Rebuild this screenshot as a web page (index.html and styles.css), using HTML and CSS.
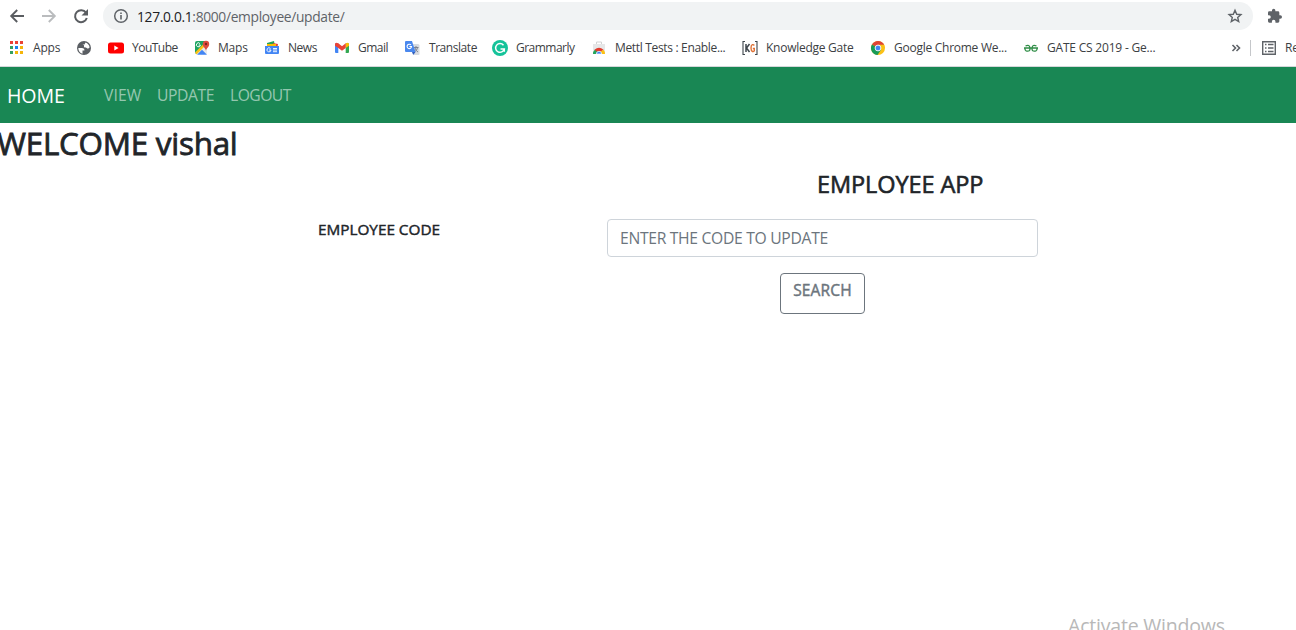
FILE: index.html
```html
<!DOCTYPE html>
<html lang="en">
<head>
<meta charset="utf-8">
<title>Employee App</title>
<link rel="stylesheet" href="styles.css">
</head>
<body>
<header class="chrome">
  <div class="toolbar">
    <svg class="tool" viewBox="0 0 16 16"><path d="M15 8H2.5M8.2 2L2.2 8l6 6" fill="none" stroke="#5a5d61" stroke-width="1.9"/></svg>
    <svg class="tool" viewBox="0 0 16 16"><path d="M1 8h12.5M7.8 2l6 6-6 6" fill="none" stroke="#babcbe" stroke-width="1.9"/></svg>
    <svg class="tool" viewBox="0 0 16 16"><path d="M13 4.7A6 6 0 1 0 13.8 10" fill="none" stroke="#5a5d61" stroke-width="2"/><path d="M15 1v6.5H8.5z" fill="#5a5d61"/></svg>
    <div class="address">
      <svg class="info" viewBox="0 0 16 16"><circle cx="8" cy="8" r="6.3" fill="none" stroke="#5f6368" stroke-width="1.5"/><path d="M7.2 7h1.6v4.5H7.2zM7.2 4.4h1.6V6H7.2z" fill="#5f6368"/></svg>
      <span class="url"><b>127.0.0.1</b>:8000/employee/update/</span>
      <svg class="star" viewBox="0 0 16 16"><path d="M8 2.300l1.700 4 4.200.3-3.200 2.800 1 4.200L8 11.400l-3.700 2.200 1-4.200-3.200-2.800 4.200-.3z" fill="none" stroke="#5f6368" stroke-width="1.4"/></svg>
    </div>
    <svg class="puzzle" viewBox="1 0 23 24"><path d="M20.5 11H19V7a2 2 0 0 0-2-2h-4V3.500a2.500 2.500 0 0 0-5 0V5H4a2 2 0 0 0-2 2v3.800h1.500a2.700 2.700 0 0 1 0 5.400H2V20a2 2 0 0 0 2 2h3.800v-1.500a2.700 2.700 0 0 1 5.400 0V22H17a2 2 0 0 0 2-2v-4h1.500a2.500 2.500 0 0 0 0-5z" fill="#5f6368"/></svg>
  </div>
  <nav class="bookmarks">
    <a class="mark"><svg viewBox="0 0 16 16"><path d="M2 1h3v3H2zM7 1h3v3H7zM12 1h3v3h-3z" fill="#ea4335"/><path d="M2 6h3v3H2zM2 11h3v3H2z" fill="#34a060"/><path d="M7 6h3v3H7z" fill="#1a83f0"/><path d="M12 6h3v3h-3zM7 11h3v3H7zM12 11h3v3h-3z" fill="#f5b50a"/></svg><span class="t-apps">Apps</span></a>
    <a class="mark"><svg viewBox="0 0 16 16"><circle cx="8" cy="8" r="7" fill="#5a5e63"/><path d="M2.300 8h3.500c2 0 2.800 1 2.600 2.500H6.500v3.200C4 13 2.300 11 2.300 8zM9.500 2.500c2.300.7 4 2.700 4.100 5L12 8.700 9.800 7.500 8 7.300V5.200L6.500 4.500h2z" fill="#fff"/></svg></a>
    <a class="mark"><svg viewBox="0 0 16 16"><rect y="2.500" width="16" height="11" rx="2.500" fill="#f00"/><path d="M6.300 5.500v5l4.300-2.500z" fill="#fff"/></svg><span class="t-yt">YouTube</span></a>
    <a class="mark"><svg viewBox="0 0 16 16"><path d="M1 3q0-2 2-2h10v13H3q-2 0-2-2z" fill="#1da462"/><path d="M2 14L13 3v11z" fill="#e8eaed"/><path d="M3 14.800l5-5 5 5z" fill="#4285f4"/><path d="M1 12.500L11 2.500l1.500 2L2.500 14.500z" fill="#fbc116"/><path d="M5.900 3.500A2 2 0 1 0 6.400 5H4.700" fill="none" stroke="#fff"/><path d="M12 11c0-3-3.200-3.500-3.200-7a3.200 3.200 0 0 1 6.400 0c0 3.500-3.200 4-3.200 7z" fill="#dd4b3e"/><circle cx="12" cy="4" r="1.200" fill="#7f231c"/></svg><span class="t-maps">Maps</span></a>
    <a class="mark"><svg viewBox="0 0 16 16"><path d="M3 3l7-2 1 6H3z" fill="#24a35a"/><path d="M9 3l5 1-1 6H8z" fill="#e94335"/><path d="M3 4h9v5H3z" fill="#fbbc04"/><path d="M1 6h14v7q0 1-1 1H2q-1 0-1-1z" fill="#4285f4"/><path d="M6.500 8.500A2 2 0 1 0 7 10H5M9 8.500h4M9 10h4M9 11.700h4" fill="none" stroke="#fff" stroke-width=".9"/></svg><span class="t-news">News</span></a>
    <a class="mark"><svg viewBox="0 0 16 16"><path d="M1 3.500h3.300V13H2q-1 0-1-1z" fill="#4285f4"/><path d="M11.700 3.500H15V12q0 1-1 1h-2.300z" fill="#34a853"/><path d="M11.700 3.300q3.300-1.500 3.300 1v1.500L11.700 8z" fill="#fbbc04"/><path d="M1 4.300q0-2.500 3.300-1L8 6.200l3.700-2.900V8L8 10.800 4.300 8 1 5.800z" fill="#ea4335"/></svg><span class="t-gmail">Gmail</span></a>
    <a class="mark"><svg viewBox="0 0 16 16"><path d="M7 4h7q1.500 0 1.500 1.500V14q0 1-1 1H10z" fill="#d8dbe0"/><path d="M9.500 7.500h5M12 6v1.500M10.500 12q3-2 3-4.500M11 8q1 3 3 4" fill="none" stroke="#747b88" stroke-width=".9"/><path d="M2 1h6l3.500 11H2q-1 0-1-1V2q0-1 1-1z" fill="#4a88ee"/><path d="M8 12h3.500L9.200 15z" fill="#315fbd"/><path d="M7 5A2.200 2.200 0 1 0 7.500 6.500H5.400" fill="none" stroke="#fff" stroke-width="1.100"/></svg><span class="t-trans">Translate</span></a>
    <a class="mark"><svg viewBox="0 0 16 16"><circle cx="8" cy="8" r="8" fill="#15c39a"/><path d="M11.500 5.200A4.400 4.400 0 1 0 12.300 9H8.500M12.300 9v2.800" fill="none" stroke="#fff" stroke-width="1.500"/></svg><span class="t-gram">Grammarly</span></a>
    <a class="mark"><svg viewBox="0 0 16 16"><path d="M2 4h12v10H2z" fill="#e6e7e8"/><path d="M5.500 4V2h5v2" fill="none" stroke="#d1d3d4"/><path d="M2 14a6 6 0 0 1 2-4.500l4 2-2.500 2.500z" fill="#24a55b"/><path d="M3.500 9.800Q8 5.800 12.500 9.800l-2.500 2H6z" fill="#e33b2e"/><path d="M12.500 9.800q1.700 2 1.500 4.200H9.500V11.500z" fill="#fbc116"/><path d="M5.300 14a2.700 2.700 0 0 1 5.400 0z" fill="#4285f4" stroke="#fff" stroke-width=".7"/></svg><span class="t-mettl">Mettl Tests : Enable...</span></a>
    <a class="mark"><svg viewBox="0 0 16 16"><path d="M3 1.500H1v13h2M13 1.500h2v13h-2" fill="none" stroke="#3e454c" stroke-width="1.100"/><path d="M4 4v8M7.500 4L4.500 8l3 4" fill="none" stroke="#3e454c" stroke-width="1.500"/><path d="M12.300 5.500Q11.500 4.300 10.400 4.700 9 5.200 9 8t1.500 3.500q1.100.3 1.800-.7V8.500h-1.500" fill="none" stroke="#df7136" stroke-width="1.400"/></svg><span class="t-kg">Knowledge Gate</span></a>
    <a class="mark"><svg viewBox="0 0 16 16"><circle cx="8" cy="8" r="7" fill="#fbc116"/><path d="M8 8L2 4.400A7 7 0 0 1 14.100 4.700z" fill="#df4437"/><path d="M8 8L1.900 4.500A7 7 0 0 0 7.500 15L11 9.800z" fill="#189b57"/><path d="M8 4.700h6.100L15 8h-4z" fill="#fbc116"/><circle cx="8" cy="8" r="2.900" fill="#4285f4" stroke="#fff" stroke-width=".9"/></svg><span class="t-chrome">Google Chrome We...</span></a>
    <a class="mark"><svg viewBox="0 0 16 16"><path d="M1 8h14M2.500 6Q6.500 4 7 8T3 10.800Q1.800 10 1.800 8M13.500 6Q9.500 4 9 8t4 2.800q1.200-.8 1.200-2.800" fill="none" stroke="#2f8d46" stroke-width="1.300"/></svg><span class="t-gate">GATE CS 2019 - Ge...</span></a>
    <svg class="more" viewBox="0 0 10 16"><path d="M1.500 5l3 3-3 3M5.500 5l3 3-3 3" fill="none" stroke="#5f6368" stroke-width="1.600"/></svg>
    <a class="mark reading"><svg viewBox="0 0 16 16"><path d="M1.700 1.700h12.600v12.600H1.700z" fill="none" stroke="#5f6368" stroke-width="1.400"/><path d="M4 4.500h1.500M4 8h1.500M4 11.500h1.500M7 4.500h5.500M7 8h5.500M7 11.500h5.500" stroke="#5f6368" stroke-width="1.400"/></svg><span>Reading list</span></a>
  </nav>
</header>
<nav class="navbar">
  <a class="brand">HOME</a>
  <a class="link l-view">VIEW</a>
  <a class="link l-update">UPDATE</a>
  <a class="link l-logout">LOGOUT</a>
</nav>
<main class="page">
  <h2 class="welcome">WELCOME vishal</h2>
  <h4 class="title">EMPLOYEE APP</h4>
  <form class="form">
    <label class="label" for="code">EMPLOYEE CODE</label>
    <div class="fields">
      <input class="input" id="code" placeholder="ENTER THE CODE TO UPDATE">
      <button class="search" type="button">SEARCH</button>
    </div>
  </form>
</main>
<div class="watermark">Activate Windows</div>
</body>
</html>
```

FILE: styles.css
```css
* { box-sizing: border-box; }
body {
  position: relative;
  width: 1296px;
  height: 630px;
  margin: 0;
  overflow: hidden;
  background: #fff;
  color: #212529;
  font-family: "Open Sans", "Noto Sans", sans-serif;
}
svg { display: block; flex: none; }

.chrome { height: 67px; border-bottom: 1px solid #d5d7da; }
.toolbar { display: flex; align-items: center; height: 32px; padding-left: 9px; }
.tool { width: 16px; height: 16px; margin-right: 16px; }
.address {
  display: flex;
  align-items: center;
  width: 1150px;
  height: 28px;
  margin-left: -2px;
  padding: 0 10px;
  border-radius: 14px;
  background: #f1f3f4;
}
.info { width: 16px; height: 16px; }
.url { flex: 1; margin-left: 8px; color: #5f6368; font-size: 13.8px; letter-spacing: -0.32px; white-space: nowrap; }
.url b { color: #202124; font-weight: 400; }
.star { width: 16px; height: 16px; }
.puzzle { width: 16px; height: 16px; margin-left: 14px; }

.bookmarks {
  display: grid;
  grid-template-columns: 68px 32px 86px 70px 70px 70px 88px 99px 151px 128px 153px 208px 19px 60px;
  align-items: center;
  height: 32px;
  padding-left: 8px;
  color: #3c4043;
  font-size: 12px;
  letter-spacing: -0.2px;
}
.mark { display: flex; align-items: center; gap: 8px; height: 16px; white-space: nowrap; }
.mark svg { width: 16px; height: 16px; }
.mark span { margin-top: -1px; }
.mark .t-apps, .mark .t-trans { margin-left: 1px; }
.t-yt, .t-gram { letter-spacing: -0.52px; }
.t-gmail { letter-spacing: -0.5px; }
.t-news, .t-trans { letter-spacing: -0.45px; }
.t-mettl { letter-spacing: -0.33px; }
.t-kg, .t-chrome { letter-spacing: -0.26px; }
.more { width: 10px; height: 16px; }
.reading { padding-left: 10px; border-left: 1px solid #c5c7ca; }

.navbar { display: flex; align-items: center; height: 56px; padding-left: 7px; background: #198754; color: #fff; }
.brand { width: 97px; font-size: 19.6px; letter-spacing: -0.1px; }
.link { color: rgba(255, 255, 255, .55); font-size: 15.7px; letter-spacing: -0.4px; }
.l-view { width: 53px; letter-spacing: 0.1px; }
.l-update { width: 73px; }
.l-logout { letter-spacing: -0.55px; }

.welcome, .title, .label, .search { -webkit-text-stroke: 0.45px currentColor; }
.welcome { margin: 1px 0 0 -3px; font-size: 31.4px; line-height: 38px; font-weight: 400; letter-spacing: -0.25px; -webkit-text-stroke-width: 0.8px; }
.title { margin: 8px 0 0 817px; font-size: 23.5px; line-height: 29px; font-weight: 400; letter-spacing: -0.08px; -webkit-text-stroke-width: 0.6px; }
.form { display: flex; margin-top: 20px; padding-left: 318px; }
.label { width: 289px; font-size: 15.3px; line-height: 20px; letter-spacing: 0; }
.fields { display: flex; flex-direction: column; align-items: center; gap: 16px; width: 431px; }
.input {
  width: 100%;
  height: 38px;
  padding: 6px 12px;
  border: 1px solid #ced4da;
  border-radius: 4px;
  background: #fff;
  font: 15.7px/24px "Open Sans", sans-serif;
  letter-spacing: -0.31px;
}
.input::placeholder { color: #6c757d; opacity: 1; }
.search {
  width: 85px;
  height: 41px;
  padding: 0 0 8px;
  border: 1px solid #6c757d;
  border-radius: 4px;
  background: #fff;
  color: #6c757d;
  font: 400 15.5px/24px "Open Sans", sans-serif;
  letter-spacing: 0.15px;
}
.watermark { position: absolute; left: 1068px; top: 612px; color: #b8b8b8; font-size: 19.5px; line-height: 27px; letter-spacing: -0.2px; white-space: nowrap; }
```
